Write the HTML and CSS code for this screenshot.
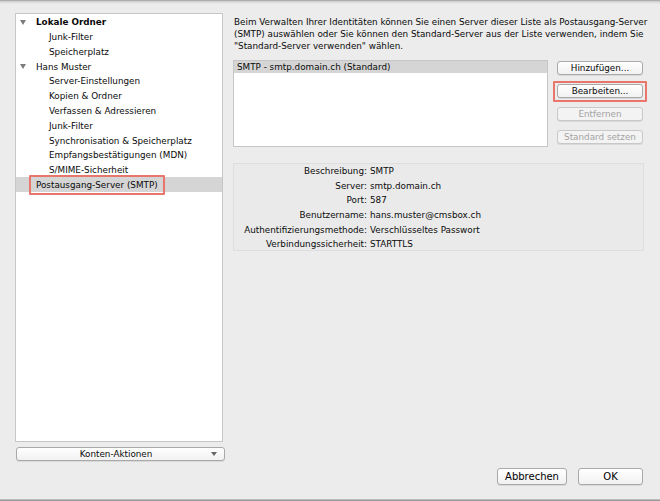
FILE: index.html
```html
<!DOCTYPE html>
<html lang="de">
<head>
<meta charset="utf-8">
<title>Postausgang-Server (SMTP)</title>
<link rel="stylesheet" href="styles.css">
</head>
<body>
<div class="window">
  <div class="topshade"></div>
  <div class="main">
    <div class="left">
      <div class="tree">
        <div class="row top"><span class="twisty"></span><span class="bold">Lokale Ordner</span></div>
        <div class="row child">Junk-Filter</div>
        <div class="row child">Speicherplatz</div>
        <div class="row top"><span class="twisty"></span><span>Hans Muster</span></div>
        <div class="row child">Server-Einstellungen</div>
        <div class="row child">Kopien &amp; Ordner</div>
        <div class="row child">Verfassen &amp; Adressieren</div>
        <div class="row child">Junk-Filter</div>
        <div class="row child">Synchronisation &amp; Speicherplatz</div>
        <div class="row child">Empfangsbestätigungen (MDN)</div>
        <div class="row child">S/MIME-Sicherheit</div>
        <div class="row selected"><span class="mark">Postausgang-Server (SMTP)</span></div>
      </div>
      <div class="btn konten"><span class="konten-label">Konten-Aktionen</span><span class="drop"></span></div>
    </div>
    <div class="right">
      <p class="intro"><span>Beim Verwalten Ihrer Identitäten können Sie einen Server dieser Liste als Postausgang-Server</span><span>(SMTP) auswählen oder Sie können den Standard-Server aus der Liste verwenden, indem Sie</span><span>"Standard-Server verwenden" wählen.</span></p>
      <div class="listrow">
        <div class="listbox">
          <div class="listitem">SMTP - smtp.domain.ch (Standard)</div>
        </div>
        <div class="btncol">
          <div class="btn">Hinzufügen...</div>
          <div class="markwrap"><div class="btn">Bearbeiten...</div></div>
          <div class="btn disabled">Entfernen</div>
          <div class="btn disabled">Standard setzen</div>
        </div>
      </div>
      <div class="details">
        <span class="lbl">Beschreibung:</span><span class="val">SMTP</span>
        <span class="lbl">Server:</span><span class="val">smtp.domain.ch</span>
        <span class="lbl">Port:</span><span class="val">587</span>
        <span class="lbl">Benutzername:</span><span class="val">hans.muster@cmsbox.ch</span>
        <span class="lbl">Authentifizierungsmethode:</span><span class="val">Verschlüsseltes Passwort</span>
        <span class="lbl">Verbindungssicherheit:</span><span class="val">STARTTLS</span>
      </div>
      <div class="footer">
        <div class="btn big cancel">Abbrechen</div>
        <div class="btn big ok">OK</div>
      </div>
    </div>
  </div>
  <div class="bottomline"></div>
</div>
</body>
</html>
```

FILE: styles.css
```css
html, body {
  margin: 0;
  padding: 0;
  background: #ececec;
}
.window {
  width: 660px;
  height: 501px;
  display: flex;
  flex-direction: column;
  background: #ececec;
  font-family: "DejaVu Sans", "Liberation Sans", sans-serif;
  font-size: 8.8px;
  color: #0a0a0a;
  overflow: hidden;
}
.topshade {
  height: 4px;
  background: linear-gradient(#9c9c9c, #d4d4d4 40%, #ececec);
  flex: none;
}
.main {
  flex: 1;
  display: flex;
  padding: 9px 0 0 15px;
  gap: 10px;
  min-height: 0;
}
.left {
  width: 208px;
  display: flex;
  flex-direction: column;
}
.tree {
  box-sizing: border-box;
  width: 208px;
  height: 429px;
  padding-top: 1px;
  background: #fff;
  border: 1px solid #c6c6c6;
}
.row {
  height: 14.77px;
  display: flex;
  align-items: center;
  white-space: nowrap;
}
.row.top {
  padding-left: 4px;
}
.twisty {
  width: 0;
  height: 0;
  border-left: 3.5px solid transparent;
  border-right: 3.5px solid transparent;
  border-top: 5px solid #7c7c7c;
  margin-right: 10px;
}
.bold {
  font-weight: bold;
}
.row.child {
  padding-left: 33px;
}
.row.selected {
  background: #d5d5d5;
  padding-left: 13px;
}
.mark {
  border: 2px solid #e8766d;
  border-radius: 1px;
  padding: 2px 5px 2px 5px;
  line-height: 12px;
}
.btn {
  box-sizing: border-box;
  background: linear-gradient(#ffffff, #f1f1f1);
  border: 1px solid #a9a9a9;
  border-radius: 3px;
  box-shadow: 0 1px 0 rgba(0,0,0,0.08);
  display: flex;
  align-items: center;
  justify-content: center;
  white-space: nowrap;
  height: 14px;
}
.konten {
  margin-top: 5px;
  margin-left: 1px;
  width: 209px;
  flex: none;
}
.konten-label {
  flex: 1;
  text-align: center;
  padding-left: 4px;
}
.drop {
  width: 0;
  height: 0;
  border-left: 3px solid transparent;
  border-right: 3px solid transparent;
  border-top: 4px solid #666;
  margin-right: 7px;
}
.right {
  width: 411px;
  display: flex;
  flex-direction: column;
  padding-bottom: 14px;
}
.intro {
  margin: 3px -10px 0 1px;
  line-height: 12px;
  display: flex;
  flex-direction: column;
  white-space: nowrap;
}
.listrow {
  display: flex;
  margin-top: 8px;
}
.listbox {
  box-sizing: border-box;
  width: 315px;
  height: 87px;
  background: #fff;
  border: 1px solid #c6c6c6;
}
.listitem {
  background: #d5d5d5;
  height: 12px;
  line-height: 12px;
  padding-left: 3px;
  white-space: nowrap;
}
.btncol {
  margin-left: 9px;
  margin-top: 1px;
  display: flex;
  flex-direction: column;
  gap: 9px;
}
.btncol .btn {
  width: 86px;
}
.markwrap {
  border: 2px solid #e8766d;
  border-radius: 1px;
  padding: 1px 2px 2px 2px;
  margin: -3px -4px -4px -4px;
}
.btn.disabled {
  color: #a3a3a3;
  border-color: #c8c8c8;
  background: #f3f3f3;
}
.details {
  box-sizing: border-box;
  margin-top: 16px;
  width: 411px;
  height: 88px;
  border: 1px solid #dedede;
  background: #eaeaea;
  display: grid;
  grid-template-columns: 133px 1fr;
  column-gap: 3px;
  grid-auto-rows: 14.6px;
  align-items: center;
}
.lbl {
  text-align: right;
  white-space: nowrap;
}
.val {
  white-space: nowrap;
}
.footer {
  margin-top: auto;
  display: flex;
  justify-content: flex-end;
  gap: 11px;
  padding-right: 1px;
}
.btn.big {
  height: 17px;
  font-size: 10px;
  color: #000;
}
.cancel {
  width: 70px;
}
.ok {
  width: 65px;
}
.bottomline {
  height: 2px;
  flex: none;
  background: linear-gradient(#cfcfcf, #888888);
}
```
